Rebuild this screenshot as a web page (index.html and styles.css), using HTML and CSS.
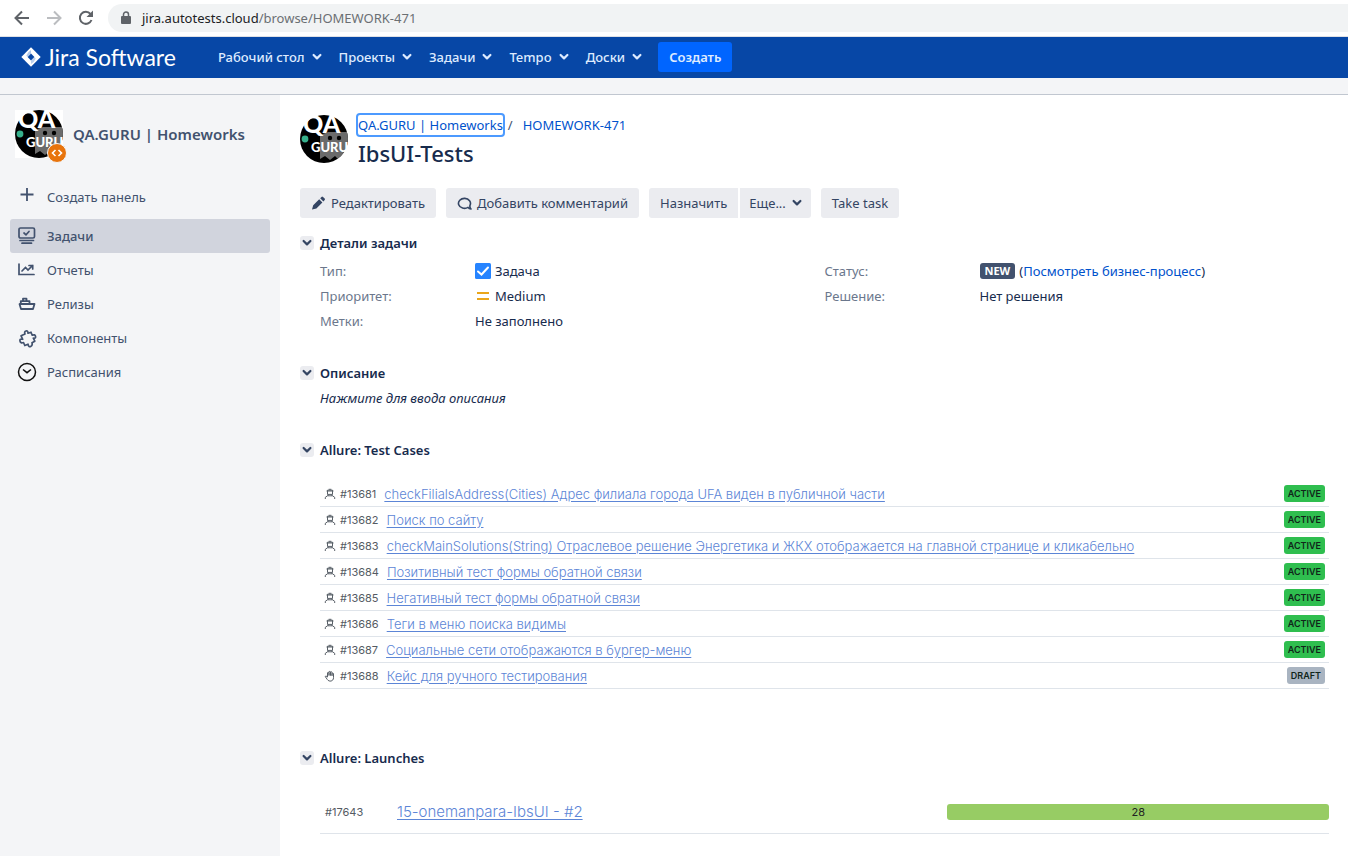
FILE: index.html
```html
<!DOCTYPE html>
<html lang="ru">
<head>
<meta charset="utf-8">
<title>[HOMEWORK-471] IbsUI-Tests - Jira</title>
<link rel="stylesheet" href="styles.css">
</head>
<body>
<svg class="defs" width="0" height="0" aria-hidden="true">
  <symbol id="chevron" viewBox="0 0 10 8"><path d="M1.600 2l3.400 3.400L8.400 2" fill="none" stroke="currentColor" stroke-width="2.200" stroke-linecap="round" stroke-linejoin="round"/></symbol>
  <symbol id="avatar" viewBox="0 0 48 48">
    <clipPath id="disc"><circle cx="24" cy="24" r="24"/></clipPath>
    <g clip-path="url(#disc)">
      <rect width="48" height="48" fill="#000"/>
      <path d="M20 20l8-3h20v27l-4-2-4 4-5-5-5 4-5-4-5 3z" fill="#6b6b6b"/>
      <circle cx="30" cy="23" r="2.200" fill="#000"/><circle cx="39" cy="23" r="2.200" fill="#000"/>
      <circle cx="5" cy="24" r="3.400" fill="#36b08c"/>
    </g>
  </symbol>
  <symbol id="person" viewBox="0 0 12 12"><path d="M3.500 2.200h5v4.200h-5zM4.600 1.300h2.800M2.500 3h7M1.300 11V9.300l2.200-1.500h5l2.200 1.500V11M4 8V6.400M8 8V6.400" fill="none" stroke="currentColor" stroke-width="1"/></symbol>
  <symbol id="hand" viewBox="0 0 12 12"><path d="M3.500 7V2.700q.8-.9 1.500 0V5.500 1.800q.8-.9 1.500 0V5.500 2.200q.8-.9 1.500 0V5.800 3.500q.9-.8 1.500 0v4.200c0 4-4.600 4.300-6.200 1.800L1.200 6.500q.5-1.300 2.300.5" fill="none" stroke="currentColor" stroke-width="1"/></symbol>
</svg>

<div class="browser">
  <button class="nav-btn" aria-label="Назад"><svg width="18" height="18" viewBox="0 0 18 18"><path d="M16 9H3M9 2.500L2.500 9 9 15.500" fill="none" stroke="currentColor" stroke-width="2"/></svg></button>
  <button class="nav-btn nav-off" aria-label="Вперед"><svg width="18" height="18" viewBox="0 0 18 18"><path d="M2 9h13M9 2.500L15.500 9 9 15.500" fill="none" stroke="currentColor" stroke-width="2"/></svg></button>
  <button class="nav-btn" aria-label="Обновить"><svg width="18" height="18" viewBox="0 0 18 18"><path d="M14.500 11A6 6 0 1 1 13.500 5" fill="none" stroke="currentColor" stroke-width="2"/><path d="M16 1.500V8H9.500z" fill="currentColor"/></svg></button>
  <div class="address">
    <svg width="12" height="14" viewBox="0 0 12 14"><rect x="1" y="5" width="10" height="8" rx="1" fill="#5f6368"/><path d="M3.500 5.500V3.500a2.500 2.500 0 0 1 5 0v2" fill="none" stroke="#5f6368" stroke-width="1.500"/></svg>
    <span><span class="host">jira.autotests.cloud</span>/browse/HOMEWORK-471</span>
  </div>
</div>

<header class="topbar">
  <a class="logo" href="#">
    <svg width="20" height="20" viewBox="0 0 20 20"><path d="M10 .3L19.700 10 10 19.700.3 10z" fill="#fff"/><path d="M10 6.600L13.400 10 10 13.400 6.600 10z" fill="#0747a6"/><path d="M10 3v3.600L6.700 9.900 5.300 8.500Q6.500 5 10 3z" fill="#8fb0e0" opacity=".7"/><path d="M10 17v-3.600l3.300-3.300L14.700 11.500Q13.500 15 10 17z" fill="#8fb0e0" opacity=".6"/></svg>
    <span>Jira Software</span>
  </a>
  <nav class="menu">
    <button>Рабочий стол<svg class="chev"><use href="#chevron"/></svg></button>
    <button>Проекты<svg class="chev"><use href="#chevron"/></svg></button>
    <button>Задачи<svg class="chev"><use href="#chevron"/></svg></button>
    <button>Tempo<svg class="chev"><use href="#chevron"/></svg></button>
    <button>Доски<svg class="chev"><use href="#chevron"/></svg></button>
  </nav>
  <button class="create">Создать</button>
</header>
<div class="banner"></div>

<div class="page">
  <aside class="sidebar">
    <div class="project">
      <div class="project-pic">
        <svg class="avatar" viewBox="0 0 48 48"><use href="#avatar"/><text x="3" y="18" class="avatar-qa">QA</text><text x="11" y="37" class="avatar-guru">GURU</text></svg>
        <svg class="badge" width="20" height="20" viewBox="0 0 20 20"><circle cx="10" cy="10" r="9.500" fill="#e8740c" stroke="#f4f5f7"/><path d="M8.500 7L5.500 10l3 3M11.500 7l3 3-3 3" fill="none" stroke="#fff" stroke-width="1.600"/></svg>
      </div>
      <a href="#">QA.GURU | Homeworks</a>
    </div>
    <nav class="side-nav">
      <a href="#" class="add"><svg width="20" height="20" viewBox="0 0 20 20"><path d="M10 1v13M3.500 7.500h13" fill="none" stroke="currentColor" stroke-width="1.800"/></svg>Создать панель</a>
      <a href="#" class="current"><svg width="20" height="20" viewBox="0 0 20 20"><g fill="none" stroke="currentColor" stroke-width="1.700" stroke-linecap="round"><rect x="2" y="2" width="15.500" height="10" rx="1.500"/><path d="M7 7l2 1.800L12 5.500M3 14.500h13.500M5 17.200h9.500"/></g></svg>Задачи</a>
      <a href="#"><svg width="20" height="20" viewBox="0 0 20 20"><g fill="none" stroke="currentColor" stroke-width="1.700" stroke-linecap="round"><path d="M2 4v10.500h15M5 11l3.500-3.500 2.500 2.500 4.500-4.500M12 5.500h3.700V9"/></g></svg>Отчеты</a>
      <a href="#"><svg width="20" height="20" viewBox="0 0 20 20"><g fill="none" stroke="currentColor" stroke-width="1.800" stroke-linejoin="round"><path d="M2.500 10h15L16 15H4zM3.800 10V7.200h8.700V10M6 7V4.700h3.500V7"/></g></svg>Релизы</a>
      <a href="#"><svg width="20" height="20" viewBox="0 0 20 20"><path d="M7.500 5Q6.500 2.500 8.500 2t2 2.200l3-1 1.200 3Q17.500 5 18 7.300T15.800 9.200l1.500 3-2.800 1.500q.8 2.800-1.300 3.800T10.500 15.200l-3.200 1.300L6 13.500Q3 14.500 2.500 12T5.200 10.300L3.600 6.800z" fill="none" stroke="currentColor" stroke-width="1.700" stroke-linejoin="round" transform="translate(.5 1)"/></svg>Компоненты</a>
      <a href="#"><svg class="clock" width="20" height="20" viewBox="0 0 20 20"><g fill="none" stroke="currentColor" stroke-width="1.500"><circle cx="10" cy="10" r="8.500"/><path d="M6 7.500l4 3.200 4-3.200"/></g></svg>Расписания</a>
    </nav>
  </aside>

  <main class="issue">
    <div class="issue-head">
      <svg class="avatar" viewBox="0 0 48 48"><use href="#avatar"/><text x="3" y="18" class="avatar-qa">QA</text><text x="11" y="37" class="avatar-guru">GURU</text></svg>
      <div>
        <div class="crumbs"><a href="#" class="focused">QA.GURU | Homeworks</a><span>/</span><a href="#">HOMEWORK-471</a></div>
        <h1>IbsUI-Tests</h1>
      </div>
    </div>

    <div class="toolbar">
      <button><svg width="16" height="14" viewBox="0 0 16 14"><path d="M1 13.500l1.200-4.300 6-6 3.200 3.200-6 6zM9.200 2.200l1.300-1.300q.7-.6 1.500 0l1.700 1.700q.6.800 0 1.500L12.400 5.400z" fill="currentColor"/></svg>Редактировать</button>
      <button><svg width="16" height="14" viewBox="0 0 16 14"><path d="M11 11.400A6 5 0 1 1 13 9.300Q12.500 11.500 14 13q-2 0-3-1.600z" fill="none" stroke="currentColor" stroke-width="1.600" stroke-linejoin="round"/></svg>Добавить комментарий</button>
      <div class="group"><button>Назначить</button><button>Еще...<svg class="chev"><use href="#chevron"/></svg></button></div>
      <button>Take task</button>
    </div>

    <section class="details">
      <h2><button aria-label="Свернуть: Детали задачи"><svg class="chev"><use href="#chevron"/></svg></button>Детали задачи</h2>
      <div class="fields">
        <dl>
          <dt>Тип:</dt><dd><svg width="16" height="16" viewBox="0 0 16 16"><rect width="16" height="16" rx="1.500" fill="#2684ff"/><path d="M3 8.500l3.500 3L13 4.500" fill="none" stroke="#fff" stroke-width="2" stroke-linecap="round"/></svg>Задача</dd>
          <dt>Приоритет:</dt><dd><svg width="16" height="16" viewBox="0 0 16 16"><path d="M2 5h12M2 11h12" stroke="#eaa61b" stroke-width="2"/></svg>Medium</dd>
          <dt>Метки:</dt><dd>Не заполнено</dd>
        </dl>
        <dl>
          <dt>Статус:</dt><dd><span class="lozenge">NEW</span><span>(<a href="#">Посмотреть бизнес-процесс</a>)</span></dd>
          <dt>Решение:</dt><dd>Нет решения</dd>
        </dl>
      </div>
    </section>

    <section class="description">
      <h2><button aria-label="Свернуть: Описание"><svg class="chev"><use href="#chevron"/></svg></button>Описание</h2>
      <p>Нажмите для ввода описания</p>
    </section>

    <section class="cases">
      <h2><button aria-label="Свернуть: Allure: Test Cases"><svg class="chev"><use href="#chevron"/></svg></button>Allure: Test Cases</h2>
      <ul class="allure">
        <li><svg class="kind"><use href="#person"/></svg><span class="num">#13681</span><a href="#">checkFilialsAddress(Cities) Адрес филиала города UFA виден в публичной части</a><span class="state">ACTIVE</span></li>
        <li><svg class="kind"><use href="#person"/></svg><span class="num">#13682</span><a href="#">Поиск по сайту</a><span class="state">ACTIVE</span></li>
        <li><svg class="kind"><use href="#person"/></svg><span class="num">#13683</span><a href="#">checkMainSolutions(String) Отраслевое решение Энергетика и ЖКХ отображается на главной странице и кликабельно</a><span class="state">ACTIVE</span></li>
        <li><svg class="kind"><use href="#person"/></svg><span class="num">#13684</span><a href="#">Позитивный тест формы обратной связи</a><span class="state">ACTIVE</span></li>
        <li><svg class="kind"><use href="#person"/></svg><span class="num">#13685</span><a href="#">Негативный тест формы обратной связи</a><span class="state">ACTIVE</span></li>
        <li><svg class="kind"><use href="#person"/></svg><span class="num">#13686</span><a href="#">Теги в меню поиска видимы</a><span class="state">ACTIVE</span></li>
        <li><svg class="kind"><use href="#person"/></svg><span class="num">#13687</span><a href="#">Социальные сети отображаются в бургер-меню</a><span class="state">ACTIVE</span></li>
        <li><svg class="kind"><use href="#hand"/></svg><span class="num">#13688</span><a href="#">Кейс для ручного тестирования</a><span class="state draft">DRAFT</span></li>
      </ul>
    </section>

    <section>
      <h2><button aria-label="Свернуть: Allure: Launches"><svg class="chev"><use href="#chevron"/></svg></button>Allure: Launches</h2>
      <div class="launch"><span class="num">#17643</span><a href="#">15-onemanpara-IbsUI - #2</a><div class="bar">28</div></div>
    </section>
  </main>
</div>
</body>
</html>
```
FILE: styles.css
```css
* { box-sizing: border-box; }
body {
  margin: 0;
  min-height: 100vh;
  display: flex;
  flex-direction: column;
  background: #fff;
  color: #172b4d;
  font: 13px/20px "Noto Sans", "Open Sans", sans-serif;
}
a { color: #0052cc; text-decoration: none; }
button { font: inherit; color: inherit; border: 0; background: none; padding: 0; }
h1, h2, p, dl, dd, ul { margin: 0; padding: 0; }
svg { flex: none; display: block; }
.defs { position: absolute; }
.chev { width: 10px; height: 8px; }
.avatar { width: 48px; height: 48px; overflow: visible; }
.avatar-qa { font: 900 25px Lato, sans-serif; fill: #fff; }
.avatar-guru { font: 900 13px Lato, sans-serif; fill: #fff; }

.browser { display: flex; align-items: center; height: 37px; padding-left: 13px; border-bottom: 1px solid #dfe1e6; }
.nav-btn { width: 18px; margin-right: 14px; color: #5f6368; }
.nav-off { color: #bbbdc0; }
.address {
  flex: 1;
  display: flex;
  align-items: center;
  gap: 10px;
  height: 28px;
  margin-left: -1px;
  padding-left: 12px;
  background: #f1f3f4;
  border-radius: 14px 0 0 14px;
  color: #6b6f73;
}
.host { color: #202124; }

.topbar { display: flex; align-items: center; height: 41px; padding: 0 0 2px 21px; background: #0747a6; color: #deebff; }
.logo { display: flex; align-items: center; gap: 4px; width: 197px; color: #fff; font: 23px/28px Lato, sans-serif; }
.menu { display: flex; gap: 17px; font-weight: 500; }
.menu button { display: flex; align-items: center; gap: 7px; }
.create { height: 30px; margin-left: 16px; padding: 0 11px; border-radius: 3px; background: #0065ff; font-weight: 600; }
.banner { height: 17px; background: #f4f5f7; border-bottom: 1px solid #c1c7d0; }

.page { flex: 1; display: flex; }
.sidebar { flex: none; width: 280px; padding: 15px 10px; background: #f4f5f7; color: #42526e; }
.project { display: flex; align-items: center; gap: 10px; padding-left: 5px; margin-bottom: 22px; }
.project a { color: #42526e; font-size: 15px; font-weight: 600; }
.project-pic { position: relative; background: #fff; }
.badge { position: absolute; right: -4px; bottom: -5px; }
.side-nav a { display: flex; align-items: center; gap: 10px; height: 34px; padding-left: 7px; border-radius: 3px; color: #42526e; }
.side-nav .add { margin-bottom: 5px; }
.side-nav .current { background: #d1d4dd; font-weight: 500; }
.side-nav .clock { color: #111; }

.issue { flex: 1; min-width: 0; padding: 20px 19px 22px 20px; }
.issue-head { display: flex; gap: 8px; margin-bottom: 19px; }
.issue-head h1 { padding: 2px 0 0 2px; font-size: 22px; line-height: 32px; font-weight: 500; }
.crumbs { display: flex; gap: 5px; }
.crumbs a + span { margin-right: 5px; color: #42526e; }
.focused { margin-left: 2px; border-radius: 2px; outline: 2px solid #4c9aff; }
.toolbar { display: flex; gap: 10px; margin-bottom: 15px; color: #344563; }
.toolbar button { display: flex; align-items: center; gap: 4px; height: 30px; padding: 0 11px; border-radius: 3px; background: #ebecf0; }
.group { display: flex; gap: 2px; }
.toolbar .group button { gap: 6px; }
.toolbar .group button:first-child { border-radius: 3px 0 0 3px; }
.toolbar .group button:last-child { padding: 0 9px; border-radius: 0 3px 3px 0; }

h2 { display: flex; align-items: center; gap: 6px; font-size: 13px; line-height: 20px; font-weight: 600; }
h2 button { display: grid; place-items: center; width: 14px; height: 14px; border-radius: 3px; background: #ebecf0; color: #344563; }
.fields { display: grid; grid-template-columns: 1fr 1fr; padding: 5px 0 0 20px; }
.fields dl { display: grid; grid-template-columns: 155px 1fr; grid-auto-rows: 25px; align-items: center; }
.fields dt { color: #6b778c; }
.fields dd { display: flex; align-items: center; gap: 4px; }
.lozenge { padding: 0 5px; border-radius: 3px; background: #42526e; color: #fff; font-size: 11px; line-height: 16px; font-weight: 700; }
.details { margin-bottom: 30px; }
.description { margin-bottom: 32px; }
.description p { padding: 5px 0 0 20px; font-style: italic; }

.allure { margin: 21px 0 59px 20px; list-style: none; font-family: Inter, sans-serif; }
.allure li { display: flex; align-items: center; height: 26px; padding: 0 4px; border-bottom: 1px solid #dfe4ea; }
.kind { width: 12px; height: 12px; margin-right: 4px; color: #596068; }
.num { color: #555b63; font-size: 11px; }
.allure a, .launch a { color: #5c85d6; text-decoration: underline; text-underline-offset: 2px; font-weight: 300; }
.allure a { flex: 1; margin-left: 8px; font-size: 13px; }
.state { padding: 0 4px; border-radius: 3px; background: #2fbe4f; color: #10251a; font-size: 9px; line-height: 17px; font-weight: 600; }
.draft { background: #a9b4c1; }
.launch { display: flex; align-items: center; height: 44px; margin: 22px 0 0 20px; padding-left: 5px; border-bottom: 1px solid #dfe4ea; font-family: Inter, sans-serif; }
.launch .num { width: 72px; }
.launch a { flex: 1; font-size: 15px; }
.bar { width: 38%; border-radius: 3px; background: #97cc64; color: #222; font-size: 11px; line-height: 16px; text-align: center; }
```
